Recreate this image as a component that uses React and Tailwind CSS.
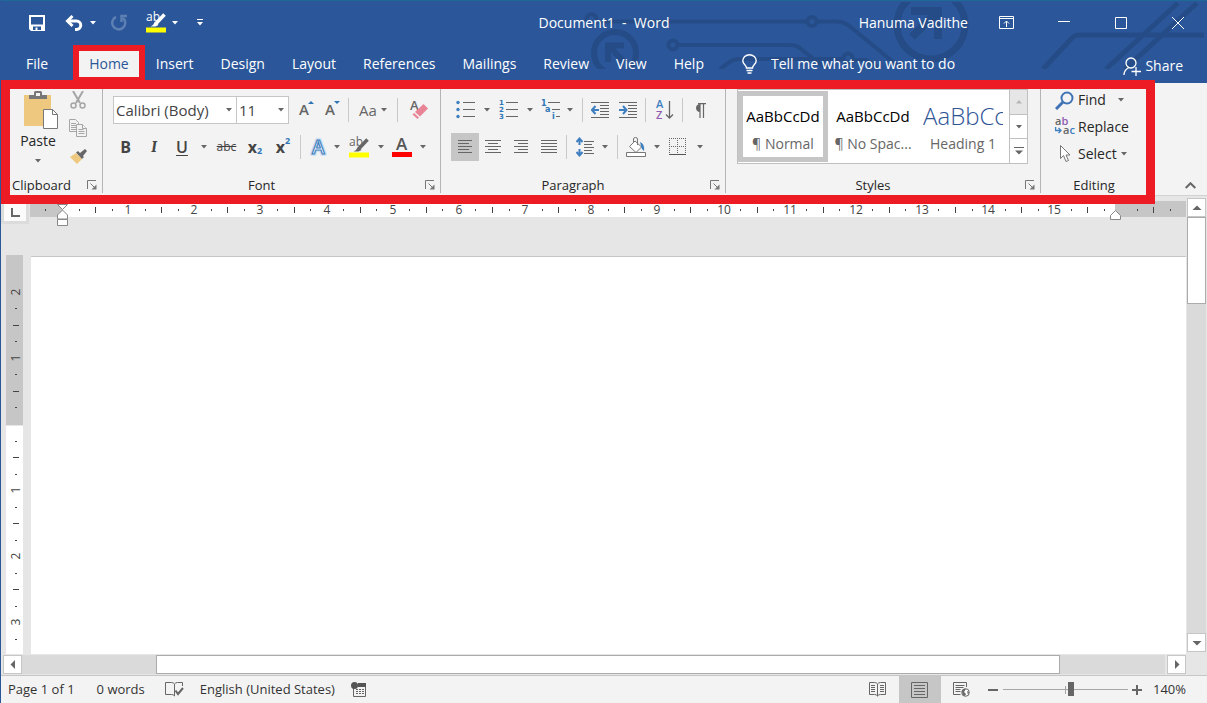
const tabs = ["Insert", "Design", "Layout", "References", "Mailings", "Review", "View", "Help"];

const CM = 66.15;

function Caret({ light }) {
  return (
    <svg width="6" height="4" viewBox="0 0 6 4" className={light ? "fill-white" : "fill-[#666666]"}>
      <path d="M0 0h6L3 3.5z" />
    </svg>
  );
}

function IconButton({ label, className = "w-7", children }) {
  return (
    <button aria-label={label} title={label} className={`flex h-7 shrink-0 items-center justify-center hover:bg-black/10 ${className}`}>
      {children}
    </button>
  );
}

function Drop({ label, className = "w-3.5", light }) {
  return (
    <IconButton label={`${label} options`} className={className}>
      <Caret light={light} />
    </IconButton>
  );
}

function Separator() {
  return <div className="mx-[3px] h-6 w-px shrink-0 bg-[#c9c9c9]" />;
}

function Group({ name, className = "", launcher = true, children }) {
  return (
    <section className={`flex flex-col border-r border-[#b5b5b5] ${className}`}>
      <div className="flex-1">{children}</div>
      <div className="flex h-4 items-center text-[13px] leading-4 text-[#262626]">
        <span className="flex-1 text-center">{name}</span>
        {launcher && (
          <button aria-label={`${name} settings`} className="flex w-5 justify-center">
            <svg width="10" height="10" viewBox="0 0 10 10" fill="none" stroke="#777" strokeWidth="1">
              <path d="M.5 9V.5H9M3.500 3.500l4 4" />
              <path d="M9.500 4.500v5h-5z" fill="#777" stroke="none" />
            </svg>
          </button>
        )}
      </div>
    </section>
  );
}

function HighlightIcon({ color = "#666666" }) {
  return (
    <svg width="20" height="21" viewBox="0 0 20 21" className="overflow-visible">
      <text x="0" y="9" fontSize="12" fontWeight="500" fontFamily="Open Sans, sans-serif" fill={color}>ab</text>
      <path d="M18.500 2.500 10 11.500" stroke={color} strokeWidth="3.500" />
      <path d="M9 9.500 12.500 13l-3 1.500H4.500L7 13z" fill={color} />
      <path d="M0 15.500h20v5H0z" fill="#ffff00" />
    </svg>
  );
}

function AlignIcon({ rows }) {
  return (
    <svg width="16" height="14" viewBox="0 0 16 14" stroke="#666666" strokeWidth="1">
      {rows.map(([from, to], i) => (
        <path key={i} d={`M${from} ${i * 3 + 0.5}H${to}`} />
      ))}
    </svg>
  );
}

function ListIcon({ marks }) {
  return (
    <svg width="19" height="20" viewBox="0 0 19 20" className="overflow-visible">
      {[3, 10, 17].map((y, i) => (
        <g key={y}>
          {marks ? (
            <text x="0" y={y + 2} fontSize="7" fontWeight="700" fontFamily="DejaVu Sans, sans-serif" fill="#2e75b6">{marks[i]}</text>
          ) : (
            <circle cx="2" cy={y - 0.5} r="1.700" fill="#3f7fbf" />
          )}
          <path d={`M7 ${y - 0.5}h12`} stroke="#666666" />
        </g>
      ))}
    </svg>
  );
}

function IndentIcon({ right }) {
  return (
    <svg width="18" height="17" viewBox="0 0 18 17" fill="none" stroke="#666666">
      <path d="M0 .5h18M9 3.500h9M9 6.500h9M9 9.500h9M9 12.500h9M0 15.500h18" />
      <path d={right ? "M0 8h7M4 4l3.500 4L4 12" : "M8 8H1.500M4.500 4 1 8l3.500 4"} stroke="#3f7fbf" strokeWidth="2" />
    </svg>
  );
}

function HeaderArt() {
  return (
    <svg width="637" height="67" viewBox="0 0 637 67" fill="none" stroke="#254c87" strokeWidth="4" className="pointer-events-none absolute right-0 top-px">
      <path d="M17 19.500a5 5 0 1 1 9 0M26 19.500h210M248 19.500h18q8 0 14 5l50 41" />
      <circle cx="242" cy="19.500" r="4.500" />
      <circle cx="45" cy="51" r="21" strokeWidth="6" />
      <path d="M38 60V43.500h16M39 44l15 16" strokeWidth="6" />
      <circle cx="103" cy="43" r="4.500" />
      <path d="M109 43h112q6 0 10 4l26 20M150 67l11-8q4-2 8-2h104" />
      <circle cx="278" cy="56" r="4.500" />
      <path d="M284 58h12l14 9" />
      <circle cx="361" cy="23" r="34" strokeWidth="7" />
      <path d="M341 9h27v28M367 10l-25 25" strokeWidth="8" />
      <path d="M473 67l29-31q3-3 6-3h126M536 67l72-66M555 67l72-66" strokeWidth="5" />
    </svg>
  );
}

function TitleBar() {
  return (
    <div className="relative flex h-[45px] items-center text-sm text-white">
      <div className="flex flex-1 items-center">
        <IconButton label="Save" className="ml-5 w-8">
          <svg width="16" height="16" viewBox="0 0 16 16">
            <path d="M0 0h16v16H2l-2-2z" fill="#fff" />
            <path d="M2 2h12v7.500H2zM4 11.500h8V15H8.500v-2.500h-2V15H4z" fill="#2b579a" />
          </svg>
        </IconButton>
        <IconButton label="Undo" className="ml-[7px] w-7">
          <svg width="18" height="16" viewBox="0 0 18 16" fill="none" stroke="#fff">
            <path d="M3 6h8.500a4.200 4.200 0 0 1 0 8.500H10" strokeWidth="3" />
            <path d="M7.500 1 2.500 6l5 5" strokeWidth="3" />
          </svg>
        </IconButton>
        <Drop label="Undo" className="w-2.5" light />
        <IconButton label="Redo" className="ml-1.5 w-[30px]">
          <svg width="18" height="17" viewBox="0 0 18 17" fill="none" stroke="#5e7fb3" strokeWidth="2.500">
            <path d="M6 3a6.500 6.500 0 1 0 7 1" />
            <path d="M17 2h-5.500v6" />
          </svg>
        </IconButton>
        <IconButton label="Text highlight color" className="ml-2 w-7">
          <HighlightIcon color="#ffffff" />
        </IconButton>
        <Drop label="Highlight" className="w-2.5" light />
        <IconButton label="Customize quick access toolbar" className="ml-2.5 w-5">
          <svg width="6" height="7" viewBox="0 0 6 7" fill="#fff">
            <path d="M0 0h6v1H0zM0 3h6L3 6.500z" />
          </svg>
        </IconButton>
      </div>
      <h1 className="whitespace-pre">{"Document1  -  Word"}</h1>
      <div className="flex flex-1 items-center justify-end">
        <span className="mr-2.5">Hanuma Vadithe</span>
        <IconButton label="Ribbon display options" className="w-[57px]">
          <svg width="15" height="13" viewBox="0 0 15 13" fill="none" stroke="#fff">
            <path d="M.5.5h14v12H.5zM.5 2.500h14M7.500 11V5.500M5 7.500l2.500-2.500L10 7.500" />
          </svg>
        </IconButton>
        <IconButton label="Minimize" className="w-[57px]">
          <svg width="12" height="12" viewBox="0 0 12 12"><path d="M0 4.500h12" stroke="#fff" /></svg>
        </IconButton>
        <IconButton label="Maximize" className="w-[57px]">
          <svg width="12" height="12" viewBox="0 0 12 12"><path d="M.5.5h11v11H.5z" fill="none" stroke="#fff" /></svg>
        </IconButton>
        <IconButton label="Close" className="mr-px w-[57px]">
          <svg width="12" height="12" viewBox="0 0 12 12"><path d="m0 0 12 12M12 0 0 12" stroke="#fff" /></svg>
        </IconButton>
      </div>
    </div>
  );
}

function TabRow() {
  return (
    <nav className="relative flex h-[38px] items-stretch gap-px text-sm text-white">
      <button className="ml-3 px-[13px]">File</button>
      <button className="relative ml-3.5 bg-[#f3f3f3] px-[13px] text-[#2b579a]">
        Home
        <span className="pointer-events-none absolute -inset-x-[3px] inset-y-0 border-6 border-[#ed1c24]" />
      </button>
      {tabs.map((tab) => (
        <button key={tab} className="px-[13px] hover:bg-white/10">{tab}</button>
      ))}
      <button className="flex items-center gap-3.5 pl-6">
        <svg width="15" height="20" viewBox="0 0 15 20" fill="none" stroke="#fff" strokeWidth="1.400">
          <path d="M4.500 14c0-3-3.700-3.500-3.700-7.300a6.700 6 0 0 1 13.400 0C14.200 10.500 10.500 11 10.500 14zM4.500 16.500h6M5.500 19h4" />
        </svg>
        Tell me what you want to do
      </button>
      <button className="ml-auto mr-6 flex items-center gap-1 pt-1">
        <svg width="18" height="19" viewBox="0 0 18 19" fill="none" stroke="#fff" strokeWidth="1.300">
          <circle cx="8" cy="6" r="5" />
          <path d="M1 18c0-4 2-6 5-7.500M13 10v9M8.500 14.500H18" />
        </svg>
        Share
      </button>
    </nav>
  );
}

function ClipboardGroup() {
  return (
    <Group name="Clipboard" className="w-[102px]">
      <div className="flex pl-4">
        <button className="flex w-[42px] flex-col items-center pt-0.5 text-sm leading-5 text-[#262626]">
          <svg width="36" height="38" viewBox="0 0 36 38" className="ml-1 shrink-0">
            <path d="M2 4h27v31H2z" fill="#efc87f" />
            <path d="M7 8V4h5V1.500q0-1.500 1.500-1.500h5Q20 0 20 1.500V4h5v4z" fill="#777" />
            <path d="M14 2h4v3h-4z" fill="#f3f3f3" />
            <path d="M21.500 18.500h9l5 5v14h-14z" fill="#fff" stroke="#777" />
            <path d="M30.500 18.500v5h5" fill="none" stroke="#777" />
          </svg>
          <span className="mt-0.5">Paste</span>
          <span className="mt-2"><Caret /></span>
        </button>
        <div className="-mt-[3px] ml-[5px] flex flex-col">
          <IconButton label="Cut">
            <svg width="16" height="19" viewBox="0 0 16 19" fill="none" stroke="#a6a6a6" strokeWidth="2">
              <path d="M3 0l7 12M13 0 6 12" />
              <circle cx="3.500" cy="14.500" r="2.500" strokeWidth="1.500" />
              <circle cx="12.500" cy="14.500" r="2.500" strokeWidth="1.500" />
            </svg>
          </IconButton>
          <IconButton label="Copy">
            <svg width="18" height="18" viewBox="0 0 18 18" fill="#f3f3f3" stroke="#a6a6a6">
              <path d="M.5.5h6l3 3v9h-9zM2 4.500h5M2 6.500h5M2 8.500h5M2 10.500h5" />
              <path d="M7.500 5.500h6l4 4v8h-10z" />
              <path d="M13.500 5.500v4h4M9.500 10.500h5M9.500 12.500h6M9.500 14.500h6" />
            </svg>
          </IconButton>
          <IconButton label="Format painter">
            <svg width="17" height="15" viewBox="0 0 17 15">
              <path d="M0 8 6 4l6 6-5 5z" fill="#efc87f" />
              <path d="m6 3.500 2-1.500 6 6-2 2zM10 4l5-4 2 2-4 5z" fill="#666666" />
            </svg>
          </IconButton>
        </div>
      </div>
    </Group>
  );
}

function ComboBox({ label, value, options, className }) {
  return (
    <div className={`relative h-7 border border-[#c6c6c6] bg-white ${className}`}>
      <select aria-label={label} defaultValue={value} className="h-full w-full appearance-none pl-0.5 text-[15px] text-[#444444] outline-none">
        {options.map((o) => (
          <option key={o}>{o}</option>
        ))}
      </select>
      <span className="pointer-events-none absolute inset-y-0 right-1 flex items-center"><Caret /></span>
    </div>
  );
}

function FontGroup() {
  return (
    <Group name="Font" className="w-[338px]">
      <div className="flex h-[42px] items-center pl-2.5">
        <ComboBox label="Font" value="Calibri (Body)" options={["Calibri (Body)", "Arial", "Cambria"]} className="w-[124px]" />
        <ComboBox label="Font size" value="11" options={["9", "10", "11", "12"]} className="-ml-px w-[53px]" />
        <IconButton label="Grow font" className="ml-1 w-7">
          <svg width="16" height="18" viewBox="0 0 16 18" className="overflow-visible">
            <text x="0" y="14" fontSize="15" fontWeight="600" fontFamily="Open Sans, sans-serif" fill="#666666">A</text>
            <path d="m9 3 3-3 3 3z" fill="#2e75b6" />
          </svg>
        </IconButton>
        <IconButton label="Shrink font" className="w-6">
          <svg width="16" height="18" viewBox="0 0 16 18" className="overflow-visible">
            <text x="0" y="14" fontSize="15" fontWeight="600" fontFamily="Open Sans, sans-serif" fill="#666666">A</text>
            <path d="m9 0 3 3 3-3z" fill="#2e75b6" />
          </svg>
        </IconButton>
        <Separator />
        <button aria-label="Change case" className="flex h-7 w-[42px] items-center justify-center gap-1 text-[15px] font-medium text-[#666666]">
          Aa <Caret />
        </button>
        <Separator />
        <IconButton label="Clear formatting" className="ml-1 w-7">
          <svg width="20" height="20" viewBox="0 0 20 20" className="overflow-visible">
            <text x="1" y="10" fontSize="13" fontWeight="600" fontFamily="Open Sans, sans-serif" fill="#666666">A</text>
            <path d="m14.500 4 4.500 4.500-8 8L6 12z" fill="#e98497" />
            <path d="m5 13 5 4.500L8.500 19 3.500 14.500z" fill="#e98497" />
          </svg>
        </IconButton>
      </div>
      <div className="flex h-8 items-center pl-2 text-base text-[#444444]">
        <IconButton label="Bold" className="w-[29px]"><b>B</b></IconButton>
        <IconButton label="Italic" className="w-7"><i className="font-serif font-bold">I</i></IconButton>
        <IconButton label="Underline"><span className="font-semibold underline underline-offset-2">U</span></IconButton>
        <Drop label="Underline" className="w-4" />
        <IconButton label="Strikethrough" className="w-[29px]"><s className="text-xs font-medium">abc</s></IconButton>
        <IconButton label="Subscript">
          <b>x</b><span className="mt-2 text-[9px] font-bold text-[#2e75b6]">2</span>
        </IconButton>
        <IconButton label="Superscript">
          <b>x</b><span className="mb-3 text-[9px] font-bold text-[#2e75b6]">2</span>
        </IconButton>
        <Separator />
        <IconButton label="Text effects" className="ml-0.5 w-6">
          <svg width="20" height="20" viewBox="0 0 20 20" className="overflow-visible">
            <text x="4" y="17" fontSize="19" fontWeight="600" fontFamily="Open Sans, sans-serif" fill="#f3f3f3" stroke="#cfe0f2" strokeWidth="4" strokeLinejoin="round">A</text>
            <text x="4" y="17" fontSize="19" fontWeight="600" fontFamily="Open Sans, sans-serif" fill="#ffffff" stroke="#3f7fbf" strokeWidth="1.200">A</text>
          </svg>
        </IconButton>
        <Drop label="Text effects" />
        <IconButton label="Highlight" className="w-[30px]"><HighlightIcon /></IconButton>
        <Drop label="Highlight" />
        <IconButton label="Font color">
          <svg width="20" height="20" viewBox="0 0 20 20" className="overflow-visible">
            <text x="4" y="13" fontSize="17" fontWeight="600" fontFamily="Open Sans, sans-serif" fill="#555555">A</text>
            <path d="M0 15h20v5H0z" fill="#ff0000" />
          </svg>
        </IconButton>
        <Drop label="Font color" />
      </div>
    </Group>
  );
}

function ParagraphGroup() {
  return (
    <Group name="Paragraph" className="w-[285px]">
      <div className="flex h-[42px] items-center pl-2.5">
        <IconButton label="Bullets" className="w-[29px]"><ListIcon /></IconButton>
        <Drop label="Bullets" />
        <IconButton label="Numbering" className="w-[29px]"><ListIcon marks={["1", "2", "3"]} /></IconButton>
        <Drop label="Numbering" />
        <IconButton label="Multilevel list" className="w-7">
          <svg width="20" height="20" viewBox="0 0 20 20" fontSize="8" fontWeight="700" fontFamily="DejaVu Sans, sans-serif" fill="#2e75b6" className="overflow-visible">
            <text x="0" y="6">1</text>
            <text x="4" y="12">a</text>
            <text x="11" y="19">i</text>
            <path d="M7 2.500h12M11 9.500h8M15 16.500h4" stroke="#666666" />
          </svg>
        </IconButton>
        <Drop label="Multilevel list" className="mr-1 w-2.5" />
        <Separator />
        <IconButton label="Decrease indent"><IndentIcon /></IconButton>
        <IconButton label="Increase indent"><IndentIcon right /></IconButton>
        <Separator />
        <IconButton label="Sort" className="w-[30px]">
          <svg width="17" height="20" viewBox="0 0 17 20" fontSize="11" fontWeight="600" fontFamily="Open Sans, sans-serif" className="overflow-visible">
            <text x="0" y="8" fill="#3f7fbf">A</text>
            <text x="0" y="19" fill="#8e5bb0">Z</text>
            <path d="M13.500 1v17M10 14.500l3.500 3.500 3.500-3.500" fill="none" stroke="#666666" strokeWidth="1.300" />
          </svg>
        </IconButton>
        <Separator />
        <IconButton label="Show paragraph marks">
          <svg width="12" height="15" viewBox="0 0 12 15">
            <path d="M5.500 1.500a3 3.500 0 0 0 0 7z" fill="#666666" stroke="#666666" />
            <path d="M4 .6h8M6 1v14M9.500 1v14" stroke="#666666" strokeWidth="1.200" />
          </svg>
        </IconButton>
      </div>
      <div className="flex h-8 items-center pl-2.5">
        <IconButton label="Align left" className="w-7 bg-[#c6c6c6]"><AlignIcon rows={[[1, 15], [1, 12], [1, 15], [1, 12], [1, 15]]} /></IconButton>
        <IconButton label="Center"><AlignIcon rows={[[0, 16], [3, 13], [0, 16], [3, 13], [0, 16]]} /></IconButton>
        <IconButton label="Align right"><AlignIcon rows={[[1, 15], [5, 15], [1, 15], [5, 15], [1, 15]]} /></IconButton>
        <IconButton label="Justify"><AlignIcon rows={[[0, 16], [0, 16], [0, 16], [0, 16], [0, 16]]} /></IconButton>
        <Separator />
        <IconButton label="Line spacing" className="ml-px w-7">
          <svg width="18" height="20" viewBox="0 0 18 20" fill="none">
            <path d="M8 4.500h10M8 7.500h8M8 10.500h10M8 13.500h8M8 16.500h10" stroke="#666666" />
            <path d="M3.500 2v6M3.500 12v6M.5 5l3-3.500 3 3.500M.5 15l3 3.500 3-3.500" stroke="#3f7fbf" strokeWidth="2" />
          </svg>
        </IconButton>
        <Drop label="Line spacing" className="mr-[3px] w-3" />
        <Separator />
        <IconButton label="Shading" className="w-[30px]">
          <svg width="20" height="20" viewBox="0 0 20 20" fill="#fff" stroke="#777">
            <path d="m9 4 6.500 6L10 15.500 3.500 9.500z" />
            <path d="M7.500 6V2q0-1.500 2-1.500t2 1.500v6" fill="none" />
            <path d="M14 5q5 2 4 9l-2-2-1-3z" fill="#3f7fbf" stroke="none" />
            <path d="M.5 15.500h19v4H.5z" />
          </svg>
        </IconButton>
        <Drop label="Shading" className="w-3" />
        <IconButton label="Borders" className="w-[30px]">
          <svg width="18" height="18" viewBox="0 0 18 18" fill="none" stroke="#666">
            <path d="M0 .5h17M0 8.500h17M.5 0v16M8.500 0v16M16.500 0v16" strokeDasharray="1 1" />
            <path d="M0 16.500h17" stroke="#555" />
          </svg>
        </IconButton>
        <Drop label="Borders" />
      </div>
    </Group>
  );
}

function StyleItem({ preview, name, selected, heading }) {
  return (
    <button className={`flex h-[71px] w-[90px] shrink-0 flex-col overflow-hidden whitespace-nowrap border-[5px] pt-1 text-center ${selected ? "border-[#c6c6c6]" : "border-transparent"}`}>
      <span className={`h-8 w-full overflow-hidden leading-8 ${heading ? "text-2xl/8 font-light text-[#2f5496]" : "text-[15px] text-black"}`}>{preview}</span>
      <span className="w-full text-sm leading-6 text-[#666666]">{name}</span>
    </button>
  );
}

function StylesGroup() {
  return (
    <Group name="Styles" className="w-[315px]">
      <div className="ml-[11px] mr-3 flex h-[75px] border border-[#c0c0c0] bg-white">
        <div className="flex flex-1 items-center overflow-hidden">
          <StyleItem preview="AaBbCcDd" name="¶ Normal" selected />
          <StyleItem preview="AaBbCcDd" name="¶ No Spac..." />
          <StyleItem preview="AaBbCc" name="Heading 1" heading />
        </div>
        <div className="flex w-[18px] shrink-0 flex-col divide-y divide-[#c0c0c0] border-l border-[#c0c0c0]">
          <button aria-label="Previous styles" disabled className="flex flex-1 items-center justify-center bg-[#e6e6e6]">
            <svg width="6" height="4" viewBox="0 0 6 4" fill="#b5b5b5"><path d="M0 3.500h6L3 0z" /></svg>
          </button>
          <button aria-label="Next styles" className="flex flex-1 items-center justify-center"><Caret /></button>
          <button aria-label="More styles" className="flex flex-1 items-center justify-center">
            <svg width="10" height="8" viewBox="0 0 10 8" fill="#666666"><path d="M0 0h10v1H0zM1 3.500h8l-4 4z" /></svg>
          </button>
        </div>
      </div>
    </Group>
  );
}

function EditingGroup() {
  return (
    <section className="flex flex-1 flex-col">
      <div className="flex flex-1 flex-col pl-3.5 text-sm text-[#262626]">
        <button className="flex h-6 items-center gap-1 pb-0.5">
          <svg width="19" height="19" viewBox="0 0 19 19" fill="none" stroke="#3f73b5">
            <circle cx="12" cy="7" r="5.500" strokeWidth="2" />
            <path d="m8 11-7 7" strokeWidth="3" />
          </svg>
          Find <span className="ml-2"><Caret /></span>
        </button>
        <button className="flex h-[27px] items-center gap-1">
          <svg width="19" height="19" viewBox="0 0 19 19" fontSize="11" fontWeight="600" fontFamily="Open Sans, sans-serif" className="overflow-visible">
            <text x="0" y="8" fill="#666666">a<tspan fill="#8e5bb0">b</tspan></text>
            <text x="8" y="17" fill="#666666">a<tspan fill="#3f7fbf">c</tspan></text>
            <path d="M.6 10v3.500H6M3.500 11 6 13.500 3.500 16" fill="none" stroke="#3f7fbf" strokeWidth="1.300" />
          </svg>
          Replace
        </button>
        <button className="flex h-[27px] items-center gap-1">
          <svg width="19" height="19" viewBox="0 0 19 19" fill="#fff" stroke="#777">
            <path d="M5.500 1.500v13l3-3 2.500 6 2.500-1-2.500-5.500h4z" />
          </svg>
          Select <Caret />
        </button>
      </div>
      <div className="h-4 pr-2 text-center text-[13px] leading-4 text-[#262626]">Editing</div>
    </section>
  );
}

function Ribbon() {
  return (
    <div className="relative z-10 flex h-[113px] border-b border-[#d2d2d2] bg-[#f3f3f3]">
      <div className="relative flex flex-1 pb-0.5 pt-1.5">
        <ClipboardGroup />
        <FontGroup />
        <ParagraphGroup />
        <StylesGroup />
        <EditingGroup />
        <span className="pointer-events-none absolute -bottom-[9px] -top-[3px] left-0 right-0 border-9 border-[#ed1c24]" />
      </div>
      <div className="flex w-[52px] items-end justify-center pb-1.5 pl-[18px]">
        <button aria-label="Collapse the ribbon">
          <svg width="11" height="7" viewBox="0 0 11 7" fill="none" stroke="#666666" strokeWidth="2"><path d="m.7 6 4.800-4.800L10.300 6" /></svg>
        </button>
      </div>
    </div>
  );
}

// Marks for one stretch of ruler, counted in quarter centimetres from the zero point
function marks(from, to) {
  const list = [];
  for (let q = from; q <= to; q++) {
    if (q !== 0) list.push(q);
  }
  return list;
}

function HorizontalRuler() {
  return (
    <div className="flex h-[22px] shrink-0">
      <button aria-label="Tab stop" className="mr-px flex h-7 w-7 items-center justify-center border-[3px] border-[#dcdcdc] bg-[#fbfbfb] pt-1">
        <svg width="9" height="9" viewBox="0 0 9 9"><path d="M1 0v8h8" fill="none" stroke="#666" strokeWidth="2" /></svg>
      </button>
      <div className="relative mt-[5px] flex h-4 flex-1">
        <div className="w-8 bg-[#c6c6c6]" />
        <div className="flex-1 bg-white" />
        <div className="w-[71px] bg-[#c6c6c6]" />
        <svg className="absolute inset-0 h-full w-full overflow-visible" fontSize="12" fontFamily="Open Sans, sans-serif" textAnchor="middle" fill="#444444">
          {marks(-1, 67).map((q) => {
            const x = Math.round(32 + (q * CM) / 4);
            if (q % 4 === 0) return q < 64 && <text key={q} x={x} y="13">{q / 4}</text>;
            return q % 2 === 0 ? <path key={q} d={`M${x} 6h1v6h-1z`} /> : <path key={q} d={`M${x} 8h1v2h-1z`} />;
          })}
          <g fill="#fff" stroke="#888">
            <path d="m27.500 3.500 5 5 5-5zM27.500 18v-4l5-5 5 5v4zM27.500 18.500h10v6h-10z" />
          </g>
        </svg>
        <svg width="12" height="12" viewBox="0 0 12 12" fill="#fff" stroke="#888" className="absolute right-16 top-2">
          <path d="M.5 10.500v-4l5-5 5 5v4z" />
        </svg>
      </div>
    </div>
  );
}

function VerticalRuler() {
  return (
    <div className="relative mx-[5px] mr-2 mt-[37px] flex w-[17px] flex-col overflow-hidden">
      <div className="mb-px h-[170px] shrink-0 bg-[#c6c6c6]" />
      <div className="flex-1 bg-white" />
      <svg className="absolute inset-0 h-full w-full" fontSize="12" fontFamily="Open Sans, sans-serif" textAnchor="middle" fill="#444444">
        {marks(-8, 13).map((q) => {
          const y = Math.round(169 + (q * CM) / 4);
          if (q % 4 === 0) return <text key={q} x="14" y={y} transform={`rotate(-90 14 ${y})`}>{Math.abs(q / 4)}</text>;
          return q % 2 === 0 ? <path key={q} d={`M7 ${y}h6v1h-6z`} /> : <path key={q} d={`M9 ${y}h2v1h-2z`} />;
        })}
      </svg>
    </div>
  );
}

function ScrollButton({ label, path, className }) {
  return (
    <button aria-label={label} className={`flex h-[19px] w-[19px] shrink-0 items-center justify-center border border-[#c6c6c6] bg-white ${className || ""}`}>
      <svg width="10" height="10" viewBox="0 0 10 10" fill="#666666"><path d={path} /></svg>
    </button>
  );
}

function Workspace() {
  return (
    <main className="flex min-h-0 flex-1 bg-[#e6e6e6]">
      <div className="flex min-w-0 flex-1 flex-col">
        <HorizontalRuler />
        <div className="flex min-h-0 flex-1">
          <VerticalRuler />
          <div contentEditable suppressContentEditableWarning role="textbox" aria-label="Document" className="mt-[38px] flex-1 border-t border-[#c6c6c6] bg-white outline-none" />
        </div>
        <div className="ml-0.5 mt-px flex h-5 shrink-0">
          <ScrollButton label="Scroll left" path="M7 0v9L2.500 4.500z" />
          <div className="mr-0.5 flex h-[19px] flex-1 bg-[#dadada]">
            <div className="ml-[134px] mr-[105px] flex-1 border border-[#ababab] bg-white" />
          </div>
          <ScrollButton label="Scroll right" path="M3 0v9l4.500-4.500z" />
        </div>
      </div>
      <div className="ml-px mr-px mt-0.5 flex w-[19px] flex-col">
        <ScrollButton label="Scroll up" path="M.5 7h9L5 2.500z" />
        <div className="flex-1 bg-[#dadada]">
          <div className="h-[87px] border border-[#ababab] bg-white" />
        </div>
        <ScrollButton label="Scroll down" path="M.5 3h9L5 7.500z" className="mb-[23px]" />
      </div>
    </main>
  );
}

function StatusBar() {
  return (
    <footer className="flex h-7 shrink-0 items-center border-t border-[#c6c6c6] bg-[#f3f3f3] pl-[7px] text-[13px] text-[#333333]">
      <button>Page 1 of 1</button>
      <button className="ml-[22px]">0 words</button>
      <button aria-label="Proofing" className="ml-5">
        <svg width="19" height="15" viewBox="0 0 19 15" fill="none" stroke="#666">
          <path d="M17.500 4V.5h-5q-2 0-3 1.500-1-1.500-3-1.500h-6v12h6q2 0 3 1.500V2" />
          <path d="m10.500 8.500 2.500 3.500 5-6" strokeWidth="2" />
        </svg>
      </button>
      <button className="ml-4">English (United States)</button>
      <button aria-label="Macro recording" className="ml-4">
        <svg width="15" height="15" viewBox="0 0 15 15">
          <path d="M3.500 3.500h11v11h-12V5" fill="none" stroke="#666" />
          <path d="M7 1h8v4H7z" fill="#555" />
          <circle cx="3.500" cy="3.500" r="3.500" fill="#555" />
          <path d="M5 7.500h8M5 9.500h8M5 11.500h8" stroke="#666" strokeDasharray="2 1" />
        </svg>
      </button>
      <div className="ml-auto flex h-full items-center">
        <button aria-label="Read mode" className="flex h-full w-[42px] items-center justify-center">
          <svg width="17" height="15" viewBox="0 0 17 15" fill="none" stroke="#666">
            <path d="M8.500 2Q7.500.5 5.500.5h-5v12h5q2 0 3 1.500V2q1-1.500 3-1.500h5v12h-5q-2 0-3 1.500M2 3.500h4M2 5.500h4M2 7.500h4M2 9.500h4M11 3.500h4M11 5.500h4M11 7.500h4M11 9.500h4" />
          </svg>
        </button>
        <button aria-label="Print layout" className="flex h-full w-[42px] items-center justify-center bg-[#c6c6c6]">
          <svg width="17" height="16" viewBox="0 0 17 16" fill="none" stroke="#666"><path d="M.5.500h16v15H.5zM3 3.500h11M3 6.500h11M3 9.500h11M3 12.500h11" /></svg>
        </button>
        <button aria-label="Web layout" className="flex h-full w-[42px] items-center justify-center">
          <svg width="17" height="15" viewBox="0 0 17 15" fill="none" stroke="#666">
            <path d="M13.500 5V.5H.5v12h7M2.500 3.500h9M2.500 5.500h8M2.500 7.500h5M2.500 9.500h5" />
            <circle cx="12.500" cy="10.500" r="3.800" fill="#fff" />
            <path d="M9 9q2-3 4-2l-2 3 2 2-1 2q-3-1-3-5M14 9l2 1-1 3z" fill="#666" stroke="none" />
          </svg>
        </button>
        <button aria-label="Zoom out" className="ml-[3px] flex h-5 w-[15px] items-center justify-center">
          <svg width="10" height="10" viewBox="0 0 10 10"><path d="M0 5h10" stroke="#666" strokeWidth="2" /></svg>
        </button>
        <div className="relative mx-0.5 flex h-5 w-[125px] items-center">
          <span className="absolute left-[62px] top-1.5 h-2 w-px bg-[#a6a6a6]" />
          <input
            type="range"
            aria-label="Zoom"
            min="0"
            max="100"
            defaultValue="55"
            className="relative h-4 w-full appearance-none bg-transparent [&::-webkit-slider-runnable-track]:h-px [&::-webkit-slider-runnable-track]:bg-[#a6a6a6] [&::-webkit-slider-thumb]:-mt-[7px] [&::-webkit-slider-thumb]:h-3.5 [&::-webkit-slider-thumb]:w-1.5 [&::-webkit-slider-thumb]:appearance-none [&::-webkit-slider-thumb]:bg-[#666666]"
          />
        </div>
        <button aria-label="Zoom in" className="flex h-5 w-[15px] items-center justify-center">
          <svg width="10" height="10" viewBox="0 0 10 10"><path d="M0 5h10M5 0v10" stroke="#666" strokeWidth="2" /></svg>
        </button>
        <button className="ml-2 mr-[21px]">140%</button>
      </div>
    </footer>
  );
}

export default function App() {
  return (
    <div className="flex h-screen flex-col overflow-hidden border-l border-[#2b579a] bg-[#2b579a] font-['Open_Sans',sans-serif]">
      <header className="relative shrink-0 border-t border-[#1d6a96]">
        <HeaderArt />
        <div className="-mt-px">
          <TitleBar />
          <TabRow />
        </div>
      </header>
      <Ribbon />
      <Workspace />
      <StatusBar />
    </div>
  );
}
